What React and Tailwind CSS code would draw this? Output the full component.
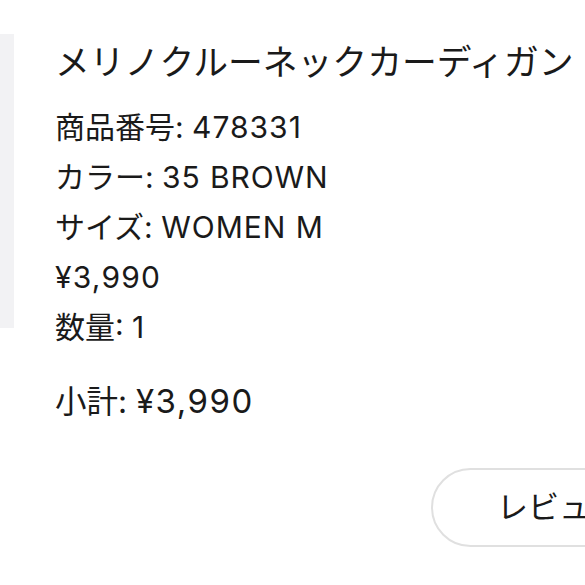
export default function App() {
  const font = { fontFamily: 'Inter, "Noto Sans CJK JP", sans-serif' };
  return (
    <div className="w-[585px] h-[585px] bg-white overflow-hidden flex text-[#1a1a1a]" style={font}>
      <div className="w-[14px] shrink-0 mt-[34px] h-[294px] bg-[#f2f2f4]" />
      <div className="ml-[41px] flex flex-col shrink-0 pt-[37px]">
        <div className="text-[34.8px] leading-[50px] whitespace-nowrap">メリノクルーネックカーディガン</div>
        <div className="mt-[15px] flex flex-col text-[30px] leading-[50px] whitespace-nowrap">
          <div>商品番号: <span className="tracking-[1px]">478331</span></div>
          <div>カラー: <span className="tracking-[0.9px]">35 BROWN</span></div>
          <div>サイズ: <span className="tracking-[1px]">WOMEN M</span></div>
          <div className="tracking-[1.2px]">¥3,990</div>
          <div>数量: <span>1</span></div>
        </div>
        <div className="mt-[24px] text-[31.5px] leading-[50px] whitespace-nowrap">小計: <span className="text-[33px] tracking-[1.5px]">¥3,990</span></div>
        <div className="mt-[41px] ml-[376px] h-[79px] w-[320px] shrink-0 rounded-full border-2 border-[#e0e0e0] flex items-center pl-[64px] text-[31px] whitespace-nowrap">
          レビューを書く
        </div>
      </div>
    </div>
  );
}
